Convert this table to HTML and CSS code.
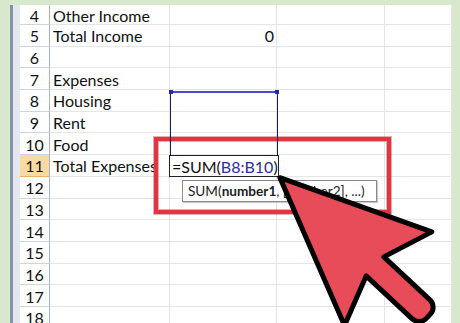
FILE: index.html
```html
<!DOCTYPE html>
<html>
<head>
<meta charset="utf-8">
<link rel="stylesheet" href="styles.css">
</head>
<body>
<div class="frame">
  <div class="edge-dark"></div>
  <div class="edge-light"></div>
  <div class="sheet">
    <div class="hd first">4</div><div class="c first">Other Income</div><div class="c first"></div><div class="c first"></div><div class="c first"></div>
    <div class="hd">5</div><div class="c">Total Income</div><div class="c num">0</div><div class="c"></div><div class="c"></div>
    <div class="hd">6</div><div class="c"></div><div class="c"></div><div class="c"></div><div class="c"></div>
    <div class="hd">7</div><div class="c">Expenses</div><div class="c"></div><div class="c"></div><div class="c"></div>
    <div class="hd">8</div><div class="c">Housing</div><div class="c"></div><div class="c"></div><div class="c"></div>
    <div class="hd">9</div><div class="c">Rent</div><div class="c"></div><div class="c"></div><div class="c"></div>
    <div class="hd">10</div><div class="c">Food</div><div class="c"></div><div class="c"></div><div class="c"></div>
    <div class="hd active">11</div><div class="c">Total Expenses</div><div class="c"></div><div class="c"></div><div class="c"></div>
    <div class="hd">12</div><div class="c"></div><div class="c"></div><div class="c"></div><div class="c"></div>
    <div class="hd">13</div><div class="c"></div><div class="c"></div><div class="c"></div><div class="c"></div>
    <div class="hd">14</div><div class="c"></div><div class="c"></div><div class="c"></div><div class="c"></div>
    <div class="hd">15</div><div class="c"></div><div class="c"></div><div class="c"></div><div class="c"></div>
    <div class="hd">16</div><div class="c"></div><div class="c"></div><div class="c"></div><div class="c"></div>
    <div class="hd">17</div><div class="c"></div><div class="c"></div><div class="c"></div><div class="c"></div>
    <div class="hd">18</div><div class="c"></div><div class="c"></div><div class="c"></div><div class="c"></div>
  </div>
</div>

<div class="highlight"></div>
<div class="range"><span class="handle hl"></span><span class="handle hr"></span></div>
<div class="edit-cell">=SUM(<span class="ref">B8:B10</span>)</div>
<div class="tip">SUM(<b>number1</b>, [number2], ...)</div>

<svg class="cursor" width="460" height="323" viewBox="0 0 460 323">
  <g transform="translate(277 175) rotate(43)">
    <path d="M4,0 L152,-64 L134,-13 L197,-13 A10 10 0 0 1 207,-3 L207,3 A10 10 0 0 1 197,13 L134,13 L152,64 Z"
      fill="#e84c58" stroke="#000" stroke-width="5" stroke-linejoin="round"/>
  </g>
</svg>
</body>
</html>
```
FILE: styles.css
```css
html, body {
  margin: 0;
  padding: 0;
}
body {
  width: 460px;
  height: 323px;
  overflow: hidden;
  background: #d8e8cc;
  position: relative;
  font-family: "Lato", "Liberation Sans", sans-serif;
}
.frame {
  display: flex;
  height: 323px;
  padding: 5px 8px 0 10px;
  box-sizing: border-box;
}
.edge-dark {
  width: 3px;
  background: #8393a8;
}
.edge-light {
  width: 7px;
  background: #e3e8ee;
}
.sheet {
  flex: 1;
  background: #fff;
  display: grid;
  grid-template-columns: 30px 120px 107px 108px 1fr;
  grid-template-rows: 20px;
  grid-auto-rows: 21.7px;
  align-content: start;
  overflow: hidden;
}
.hd, .c {
  box-sizing: border-box;
  display: flex;
  align-items: center;
  font-size: 16px;
  color: #111;
  white-space: nowrap;
  overflow: visible;
}
.hd {
  justify-content: center;
  padding-top: 1px;
  border-bottom: 1px solid #cfd5dc;
  border-right: 1px solid #a9b3bf;
  background: #fff;
}
.hd.active {
  background: #fbd9a2;
  border-bottom-color: #e6b36a;
}
.c {
  padding-left: 3px;
  padding-top: 1px;
  border-bottom: 1px solid #e2e5ea;
  border-right: 1px solid #e2e5ea;
}
.c.num {
  justify-content: flex-end;
  padding-right: 2px;
}
.highlight {
  position: absolute;
  left: 154px;
  top: 137px;
  width: 237px;
  height: 77px;
  box-sizing: border-box;
  border: 4px solid #e3343f;
  box-shadow: 0 0 0 1px rgba(170, 30, 40, 0.35), inset 0 0 0 1px rgba(170, 30, 40, 0.35);
}
.range {
  position: absolute;
  left: 170px;
  top: 91px;
  width: 108px;
  height: 64px;
  box-sizing: border-box;
  border-top: 2px solid #4a4ac4;
  border-left: 1px solid #1c1c5c;
  border-right: 1px solid #1c1c5c;
}
.handle {
  position: absolute;
  top: -3px;
  width: 4px;
  height: 4px;
  background: #2a2a9a;
}
.handle.hl { left: -2px; }
.handle.hr { right: -2px; }
.edit-cell {
  position: absolute;
  left: 169px;
  top: 155px;
  width: 110px;
  height: 22px;
  box-sizing: border-box;
  border: 1px solid #222;
  background: #fff;
  display: flex;
  align-items: center;
  padding-left: 2px;
  padding-top: 1px;
  font-size: 16px;
  color: #111;
  white-space: nowrap;
}
.edit-cell .ref {
  color: #2d2d9c;
}
.tip {
  position: absolute;
  left: 182px;
  top: 180px;
  width: 195px;
  height: 22px;
  box-sizing: border-box;
  border: 1px solid #8a8a8a;
  background: #fff;
  box-shadow: 1px 1px 1px rgba(0, 0, 0, 0.2);
  display: flex;
  align-items: center;
  padding-left: 5px;
  font-size: 13.6px;
  color: #222;
  white-space: nowrap;
}
.tip b {
  font-weight: bold;
}
.cursor {
  position: absolute;
  left: 0;
  top: 0;
  pointer-events: none;
}
```
